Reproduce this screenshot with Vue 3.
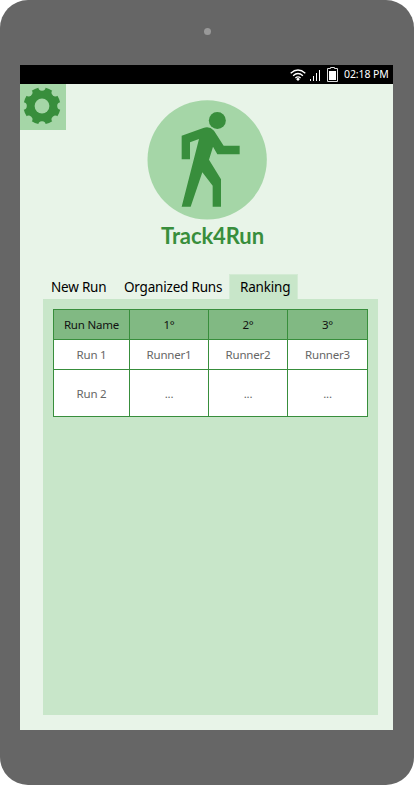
<script setup>
const notches = [0, 45, 90, 135, 180, 225, 270, 315]
const tabs = [
  { label: 'New Run', key: 'new' },
  { label: 'Organized Runs', key: 'organized' },
  { label: 'Ranking', key: 'ranking' },
]
const active = 'ranking'
const headers = ['Run Name', '1°', '2°', '3°']
const rows = [
  ['Run 1', 'Runner1', 'Runner2', 'Runner3'],
  ['Run 2', '...', '...', '...'],
]
</script>

<template>
  <div class="phone">
    <div class="bezel"><span class="camera"></span></div>
    <main class="screen">
      <div class="status">
        <svg class="wifi" width="16" height="12" viewBox="0 0 16 12">
          <g fill="none" stroke="#fff" stroke-width="1.3">
            <path d="M.7 4.3Q8-2.3 15.3 4.3" />
            <path d="M3.1 6.7Q8 2.3 12.9 6.7" />
            <path d="M5.4 9Q8 6.8 10.6 9" />
          </g>
          <circle cx="8" cy="10.3" r="1.4" fill="#fff" />
        </svg>
        <svg class="signal" width="11" height="12" viewBox="0 0 11 12" fill="#fff">
          <path d="M0 10h1v2H0zM3 7h1v5H3zM6 4h1v8H6zM9 1h1v11H9z" />
        </svg>
        <svg class="battery" width="11" height="15" viewBox="0 0 11 15">
          <path d="M3.5 1.500v-1h4v1h3v13H.5v-13z" fill="none" stroke="#ddd" />
          <path d="M2 4h7v9H2z" fill="#fff" />
        </svg>
        <span class="clock">02:18 PM</span>
      </div>
      <div class="top">
        <button class="settings" aria-label="Settings">
          <svg width="46" height="46" viewBox="-22 -22 46 46">
            <circle r="18.5" fill="#388e3c" />
            <circle
              v-for="a in notches"
              :key="a"
              cy="-18.9"
              r="3.700"
              fill="#a5d6a7"
              :transform="`rotate(${a})`"
            />
            <circle r="7.4" fill="#a5d6a7" />
          </svg>
        </button>
        <div class="brand">
          <svg class="logo" width="120" height="120" viewBox="21 15 360 360">
            <circle cx="201.5" cy="194.5" r="179" fill="#a5d6a7" />
            <g fill="#388e3c">
              <circle cx="232" cy="76.5" r="25.5" />
              <path
                d="M125 122 190 99Q208 92 222 107L251 152H299V178H232L219 155 207 194 243 253V335H218V272L187 232 152 335H125L177 132 150 142V193H125Z"
              />
            </g>
          </svg>
          <h1>Track4Run</h1>
        </div>
      </div>
      <nav class="tabs">
        <span v-for="t in tabs" :key="t.key" :class="['tab', t.key, { active: t.key === active }]">{{ t.label }}</span>
      </nav>
      <section class="panel">
        <div class="table">
          <span v-for="h in headers" :key="h" class="cell head">{{ h }}</span>
          <template v-for="(row, r) in rows" :key="r">
            <span v-for="(c, i) in row" :key="i" class="cell">{{ c }}</span>
          </template>
        </div>
      </section>
    </main>
  </div>
</template>

<style scoped>
.phone {
  box-sizing: border-box;
  width: 414px;
  height: 785px;
  padding: 0 21px 0 20px;
  background: #666;
  border-radius: 28px;
  font-family: 'Noto Sans', 'Open Sans', sans-serif;
  overflow: hidden;
}
.bezel {
  height: 65px;
  display: flex;
  justify-content: center;
}
.camera {
  width: 7px;
  height: 7px;
  margin: 28px 0 0 1px;
  border-radius: 50%;
  background: #999;
}
.screen {
  height: 665px;
  background: #e8f4e8;
}
.status {
  height: 19px;
  background: #000;
  color: #fff;
  display: flex;
  align-items: center;
  justify-content: flex-end;
  padding-right: 4px;
  box-sizing: border-box;
}
.signal {
  margin-left: 4px;
}
.battery {
  margin: 0 6px 1px;
}
.clock {
  width: 45px;
  font-size: 10.5px;
  letter-spacing: -0.1px;
  line-height: 19px;
  white-space: nowrap;
}
.top {
  display: flex;
  height: 190px;
}
.settings {
  width: 46px;
  height: 46px;
  padding: 0;
  border: 0;
  background: #a5d6a7;
}
.settings svg {
  display: block;
}
.brand {
  margin-left: 81px;
  padding-top: 16px;
}
.logo {
  display: block;
}
h1 {
  margin: 0 0 0 14px;
  font: bold 22px/31px Lato, sans-serif;
  letter-spacing: -0.1px;
  color: #388e3c;
}
.tabs {
  display: flex;
  height: 25px;
  padding-left: 23px;
  font-size: 13.5px;
  letter-spacing: -0.2px;
  line-height: 26px;
  white-space: nowrap;
}
.tab {
  box-sizing: border-box;
  padding-left: 8px;
}
.new {
  width: 73px;
}
.organized {
  width: 113px;
}
.ranking {
  width: 69px;
  padding-left: 10px;
}
.active {
  background: #c8e6c9;
  border: 1px solid #d3ebd4;
  border-bottom: 0;
  line-height: 24px;
}
.panel {
  box-sizing: border-box;
  width: 335px;
  height: 416px;
  margin-left: 23px;
  padding: 10px;
  background: #c8e6c9;
}
.table {
  display: grid;
  grid-template-columns: 75px 78px 78px 79px;
  grid-template-rows: 29px 29px 46px;
  gap: 1px;
  padding: 1px;
  width: 313px;
  background: #388e3c;
}
.cell {
  display: flex;
  align-items: center;
  justify-content: center;
  background: #fff;
  color: #666;
  font-size: 11.5px;
  letter-spacing: -0.2px;
}
.head {
  background: #81b983;
  color: #111;
}
</style>
